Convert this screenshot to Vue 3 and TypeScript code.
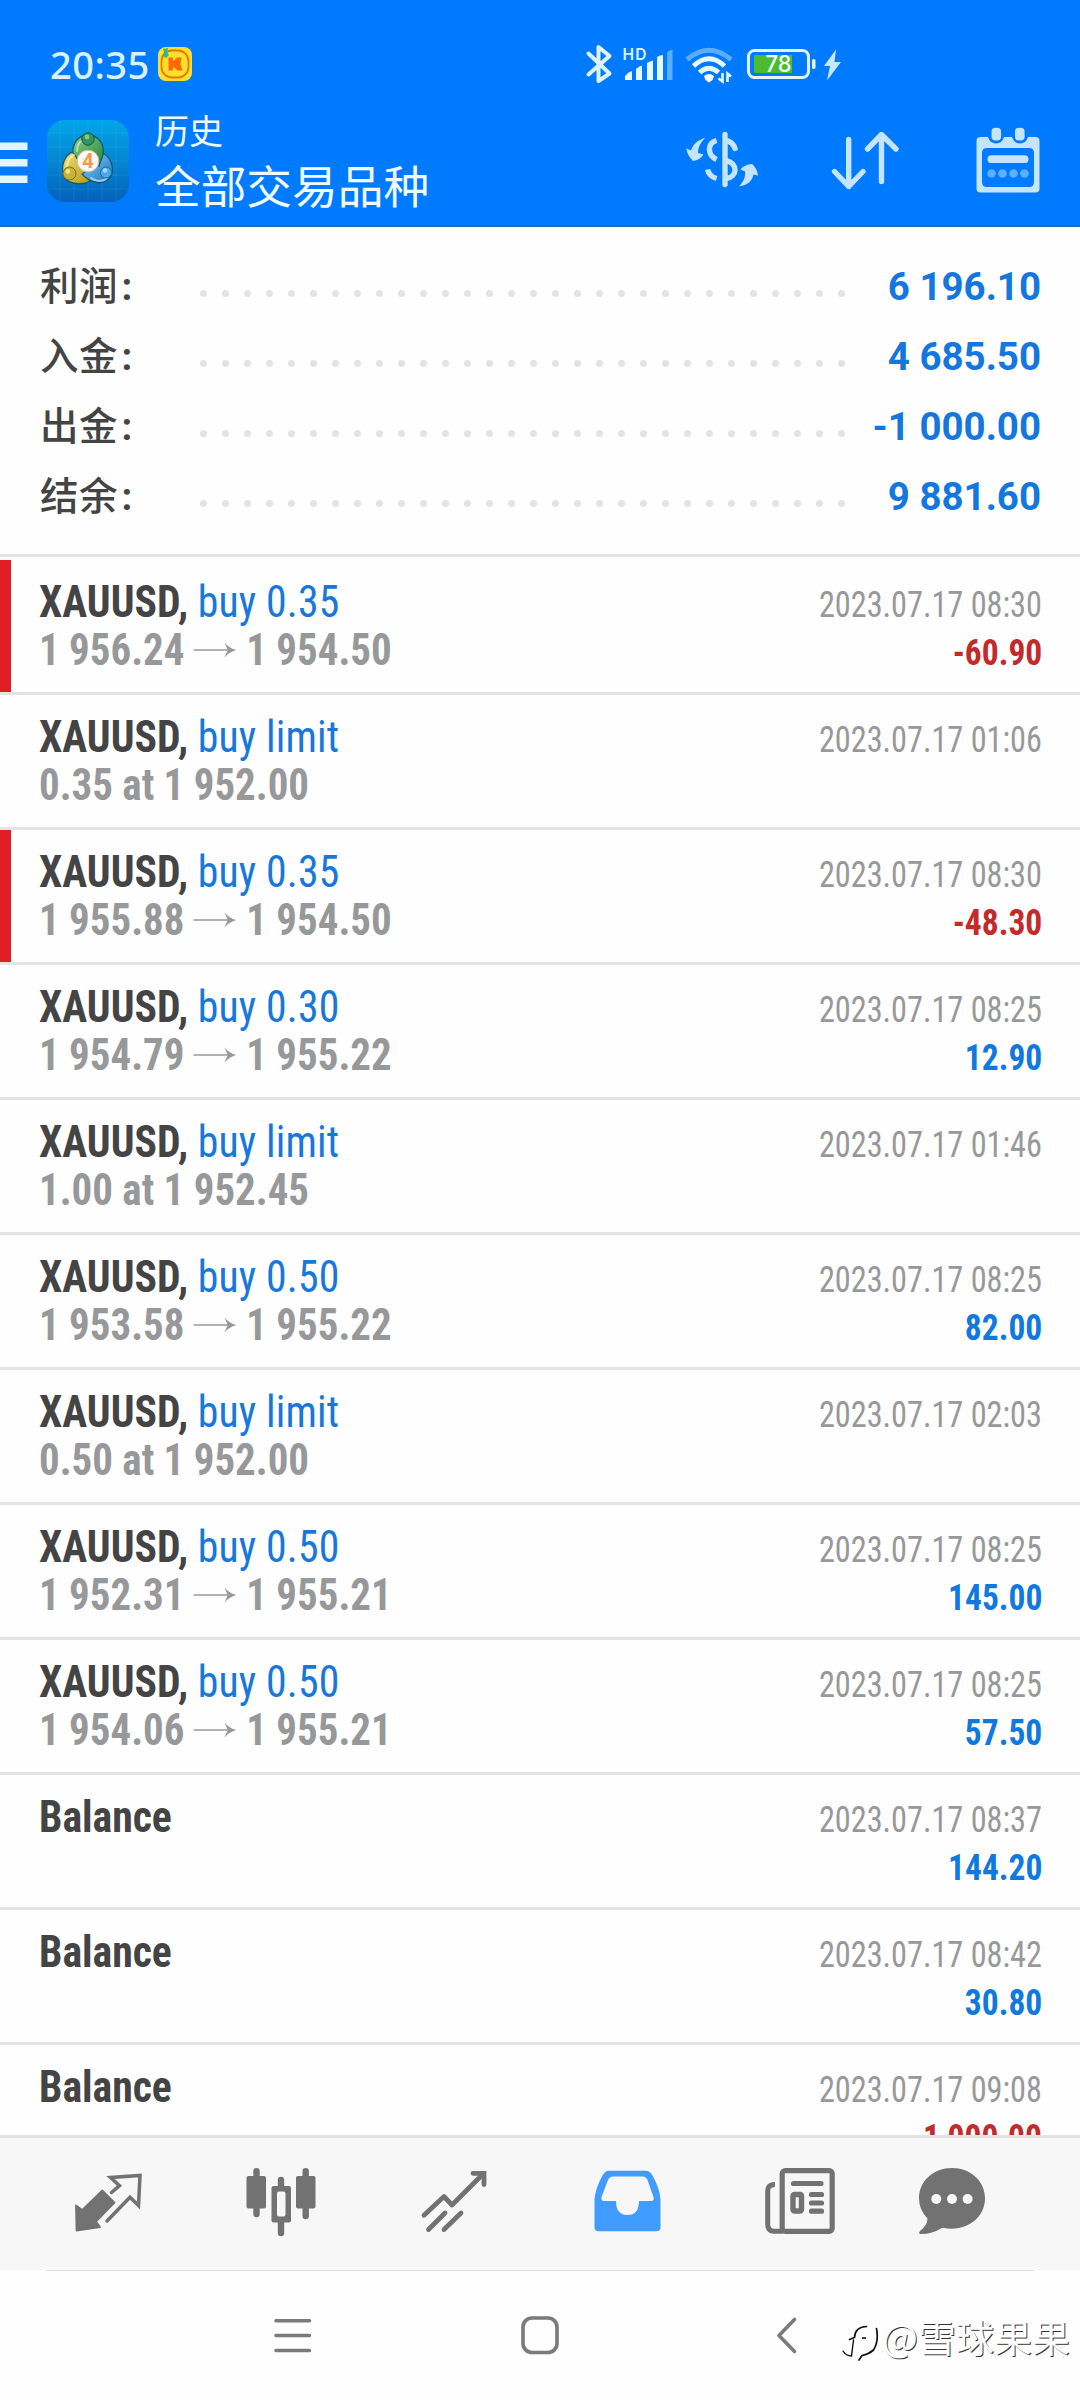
<script setup lang="ts">
interface Total {
  label: string
  value: string
}

interface Deal {
  symbol: string
  action?: string
  from?: string
  to?: string
  note?: string
  time: string
  profit?: string
  marked?: boolean
}

const totals: Total[] = [
  { label: '利润', value: '6 196.10' },
  { label: '入金', value: '4 685.50' },
  { label: '出金', value: '-1 000.00' },
  { label: '结余', value: '9 881.60' },
]

const deals: Deal[] = [
  { symbol: 'XAUUSD,', action: 'buy 0.35', from: '1 956.24', to: '1 954.50', time: '2023.07.17 08:30', profit: '-60.90', marked: true },
  { symbol: 'XAUUSD,', action: 'buy limit', note: '0.35 at 1 952.00', time: '2023.07.17 01:06' },
  { symbol: 'XAUUSD,', action: 'buy 0.35', from: '1 955.88', to: '1 954.50', time: '2023.07.17 08:30', profit: '-48.30', marked: true },
  { symbol: 'XAUUSD,', action: 'buy 0.30', from: '1 954.79', to: '1 955.22', time: '2023.07.17 08:25', profit: '12.90' },
  { symbol: 'XAUUSD,', action: 'buy limit', note: '1.00 at 1 952.45', time: '2023.07.17 01:46' },
  { symbol: 'XAUUSD,', action: 'buy 0.50', from: '1 953.58', to: '1 955.22', time: '2023.07.17 08:25', profit: '82.00' },
  { symbol: 'XAUUSD,', action: 'buy limit', note: '0.50 at 1 952.00', time: '2023.07.17 02:03' },
  { symbol: 'XAUUSD,', action: 'buy 0.50', from: '1 952.31', to: '1 955.21', time: '2023.07.17 08:25', profit: '145.00' },
  { symbol: 'XAUUSD,', action: 'buy 0.50', from: '1 954.06', to: '1 955.21', time: '2023.07.17 08:25', profit: '57.50' },
  { symbol: 'Balance', time: '2023.07.17 08:37', profit: '144.20' },
  { symbol: 'Balance', time: '2023.07.17 08:42', profit: '30.80' },
  { symbol: 'Balance', time: '2023.07.17 09:08', profit: '-1 000.00' },
]

const dots = Array.from({ length: 30 }, (_, i) => i)
</script>

<template>
  <div class="screen">
    <header class="header">
      <div class="status">
        <span class="clock">20:35</span>
        <svg class="k-app" width="34" height="34" viewBox="0 0 34 34">
          <rect width="34" height="34" rx="8" fill="#ffdf2e" />
          <rect x="3.5" y="3.5" width="27" height="27" rx="10.500" fill="none" stroke="#e07a00" stroke-width="1.800" />
          <path d="M5 2l5-1-1 4 2 3-3 3-3-2 1-4z" fill="#26b99a" />
          <path d="M10.500 10.500h4.500v4l4-4h4.500l-1 6.500 2 6.500h-5l-4.500-4v4h-4.500z" fill="#ff6a00" />
        </svg>
        <svg class="indicators" width="264" height="44" viewBox="582 42 264 44">
          <path d="M588.500 53.500L609.500 73.500 598.500 81V47L609.500 56 588.500 74.500" fill="none" stroke="#dff3ff" stroke-width="4" stroke-linejoin="round" stroke-linecap="round" />
          <text x="622.500" y="59.500" font-size="15.500" font-weight="600" textLength="24" fill="#dff3ff">HD</text>
          <g fill="#e8f8ff">
            <path d="M625 80v-4q3-4 7-5v9z" />
            <path d="M636 80V69q3-3 6-3.500V80z" />
            <path d="M647 80V63q3-2 6-2.500V80z" />
            <path d="M657 80V57q3-2 6-2V80z" />
          </g>
          <path d="M667 80V52q3-2 5.500-2.500V80z" fill="#5aadff" />
          <g fill="none" stroke="#e8f8ff" stroke-width="5">
            <path d="M687 59.500Q709 41 731 59.500" stroke="#5aadff" />
            <path d="M693.500 66Q709 51.500 724.500 66" />
            <path d="M699.500 72.500Q709 64 718.500 72.500" />
          </g>
          <path d="M704 76q5-4 10 0l-1.500 4-3.500 2.500-3.500-2.500z" fill="#fff" />
          <path d="M722.500 73v8.500l-4-3M727.500 82v-8.500l3.500 3" fill="none" stroke="#e8f8ff" stroke-width="2.600" />
          <rect x="748.500" y="50.500" width="60" height="27" rx="6" fill="none" stroke="#e2f5ff" stroke-width="3" />
          <rect x="754" y="55" width="38" height="18" fill="#4cbc2e" />
          <text x="765.500" y="72.300" font-size="22.500" font-weight="500" textLength="26" lengthAdjust="spacingAndGlyphs" fill="#f4ffff">78</text>
          <rect x="812" y="59" width="3.500" height="10" rx="1.500" fill="#e2f5ff" />
          <path d="M836 49.500L824 66h6l-3 14.500L841 62h-6.500z" fill="#c9e6ff" />
        </svg>
      </div>

      <div class="appbar">
        <svg class="drawer" width="28" height="44" viewBox="0 140 28 44">
          <path d="M0 146.200H27.500M0 162.700H27.500M0 179.200H27.500" stroke="#e4f4ff" stroke-width="7.500" />
        </svg>
        <svg class="logo" width="84" height="84" viewBox="0 0 84 84">
          <defs>
            <linearGradient id="lgBg" x1="0" y1="0" x2="0" y2="1">
              <stop offset="0" stop-color="#02a6e8" />
              <stop offset="0.550" stop-color="#0582cf" />
              <stop offset="1" stop-color="#0360ba" />
            </linearGradient>
            <linearGradient id="lgGreen" x1="0" y1="0" x2="1" y2="1">
              <stop offset="0" stop-color="#8ed08a" />
              <stop offset="1" stop-color="#1f8437" />
            </linearGradient>
            <linearGradient id="lgGold" x1="0" y1="0" x2="1" y2="1">
              <stop offset="0" stop-color="#f0e47a" />
              <stop offset="1" stop-color="#b59a16" />
            </linearGradient>
            <linearGradient id="lgBlue" x1="0" y1="0" x2="1" y2="1">
              <stop offset="0" stop-color="#8cd4f6" />
              <stop offset="1" stop-color="#1673c0" />
            </linearGradient>
          </defs>
          <rect x="1" y="1" width="82" height="82" rx="18" fill="url(#lgBg)" />
          <path d="M14 2V82M28 2V82M42 2V82M56 2V82M70 2V82M2 14H82M2 28H82M2 42H82M2 56H82M2 70H82" stroke="#5cc6f5" stroke-opacity="0.160" stroke-width="1" />
          <g stroke="#0c4c60" stroke-opacity="0.800" stroke-width="1.300">
            <path d="M17 56C15 42 21 33 31 32L44 62C36 67 20 65 17 56z" fill="url(#lgGold)" />
            <path d="M54 33C64 36 69 48 65 57C60 66 46 66 36 55L46 48z" fill="url(#lgBlue)" />
            <path d="M27 34C26 24 33 16 42 16C52 16 59 25 57 36L53 47L42 34L33 42z" fill="url(#lgGreen)" />
          </g>
          <g fill="none" stroke-width="2" stroke-linecap="round" stroke-opacity="0.700">
            <path d="M31 32C31 26 34 22 38 21" stroke="#d2f0c6" />
            <path d="M21 48C21 42 24 38 28 36" stroke="#fbf6b8" />
            <path d="M45 59C50 63 57 63 61 59" stroke="#bfe8fb" />
          </g>
          <circle cx="42" cy="20" r="6.200" fill="#35955a" stroke="#11563a" />
          <circle cx="23.500" cy="54.500" r="6.500" fill="#cdb132" stroke="#7d7420" />
          <circle cx="60" cy="53.500" r="5.500" fill="#4aaae2" stroke="#1b6aa8" />
          <circle cx="41" cy="18" r="2.400" fill="#83c790" />
          <circle cx="22" cy="52.500" r="2.400" fill="#efe48a" />
          <circle cx="59" cy="51.500" r="2.200" fill="#a5dcf8" />
          <circle cx="42" cy="42" r="10.800" fill="#fbf8f4" stroke="#c9bca6" />
          <text x="42" y="49.300" font-size="20" font-weight="700" text-anchor="middle" fill="#f09a4a">4</text>
        </svg>
        <div class="titles">
          <div class="title-small">历史</div>
          <div class="title-main">全部交易品种</div>
        </div>
        <svg class="tool-currency" width="76" height="64" viewBox="684 128 76 64">
          <g fill="none" stroke="#c5e4ff" stroke-width="5.400">
            <path d="M725 134.500V184.500" stroke-linecap="round" />
            <path d="M716.600 140.500C707 143 707 155 716.600 159.500" />
            <path d="M707.500 169.500C708.500 174 711.500 177 716.600 178.500" stroke-linecap="butt" />
            <path d="M726 140.500Q733 142 735 148.500" stroke-linecap="round" />
            <path d="M726 160.500C738 163 738 177 726 178.500" />
          </g>
          <g fill="#c5e4ff">
            <path d="M705 138C700 143 698 148 698 153L703.500 154.500Q700 160 693 161Q687.500 156 686.300 148.500L691 150.500C693 144 698 140 705 138z" />
            <path d="M739 186.500C744 181 745.500 177 745 171.500L740.500 169.500Q744 164.500 752 164Q757 168 758 175.500L753.500 174.500C752 181 748 185 739 186.500z" />
          </g>
        </svg>
        <svg class="tool-sort" width="72" height="64" viewBox="829 128 72 64">
          <g fill="none" stroke="#c5e4ff" stroke-width="5.400" stroke-linecap="round" stroke-linejoin="round">
            <path d="M848.700 139.500V186.500M834.500 171.500L848.700 186.500 863 171.500" />
            <path d="M881.500 181.500V135M867.500 149L881.500 134.500 896 149" />
          </g>
        </svg>
        <svg class="tool-calendar" width="66" height="68" viewBox="975 126 66 68">
          <path fill-rule="evenodd" fill="#c5e4ff" d="M980.500 137H988Q990 143.500 996 143.500T1004 137H1012Q1014 143.500 1020 143.500T1028 137H1035.500Q1039.500 137 1039.500 141V188.500Q1039.500 192.500 1035.500 192.500H980.500Q976.500 192.500 976.500 188.500V141Q976.500 137 980.500 137zM987 148Q982 148 982 153V182Q982 187 987 187H1029Q1034 187 1034 182V153Q1034 148 1029 148z" />
          <rect x="991.500" y="127.800" width="9.600" height="12.600" rx="4" fill="#c5e4ff" />
          <rect x="1015" y="127.800" width="9.600" height="12.600" rx="4" fill="#c5e4ff" />
          <rect x="987.500" y="155.300" width="41" height="7.800" rx="3.900" fill="#c5e4ff" />
          <g fill="#5fafff">
            <circle cx="991.500" cy="173.500" r="4.300" />
            <circle cx="1002.500" cy="173.500" r="4.300" />
            <circle cx="1013.500" cy="173.500" r="4.300" />
            <circle cx="1024.500" cy="173.500" r="4.300" />
          </g>
        </svg>
      </div>
    </header>

    <section class="totals">
      <div v-for="t in totals" :key="t.label" class="total">
        <span class="total-label">{{ t.label }}<i class="colon">:</i></span>
        <span class="leader"><i v-for="d in dots" :key="d" class="dot"></i></span>
        <b class="total-value">{{ t.value }}</b>
      </div>
    </section>

    <main class="deals">
      <article v-for="(d, i) in deals" :key="i" class="deal" :class="{ marked: d.marked }">
        <div class="line">
          <span class="name"><b class="symbol">{{ d.symbol }}</b><span v-if="d.action" class="action">{{ d.action }}</span></span>
          <span class="time">{{ d.time }}</span>
        </div>
        <div class="line">
          <span v-if="d.from" class="prices">
            <span class="price">{{ d.from }}</span>
            <svg class="arrow" width="46.500" height="18" viewBox="0 0 44 18" preserveAspectRatio="none">
              <path d="M0 9H40" stroke="#97989a" stroke-width="1.600" />
              <path d="M31.500 1.200Q35.500 6.500 43.500 9Q35.500 11.500 31.500 16.800L35 9z" fill="#97989a" />
            </svg>
            <span class="price">{{ d.to }}</span>
          </span>
          <span v-else class="prices">{{ d.note }}</span>
          <b v-if="d.profit" class="profit" :class="{ loss: d.profit.startsWith('-') }">{{ d.profit }}</b>
        </div>
      </article>
    </main>

    <nav class="tabs">
      <svg width="80" height="80" viewBox="68 104 80 80">
        <path d="M111.500 132.500L119.500 125.700 110.500 117.500 140 115.500 138.500 145.500 130 137.200 107 161" fill="none" stroke="#727272" stroke-width="3.500" stroke-linecap="round" />
        <path d="M76 145.500L82.300 150 102.300 130.500 114.500 142.700 96 161.500 100 167 76.500 170.500z" fill="#727272" stroke="#727272" stroke-width="1.800" stroke-linejoin="round" />
      </svg>
      <svg width="80" height="80" viewBox="241 104 80 80">
        <g stroke="#727272" stroke-width="6.400" stroke-linecap="round">
          <path d="M256.500 111.200V154M281 120V173M305.700 111.200V156" />
        </g>
        <rect x="246.500" y="116" width="19.500" height="32.500" rx="2" fill="#727272" />
        <rect x="296" y="116" width="19.500" height="32.500" rx="2" fill="#727272" />
        <rect x="271.500" y="126" width="19.500" height="36.500" rx="2" fill="#727272" />
        <rect x="277" y="131.500" width="8.500" height="25" rx="2" fill="#f7f7f7" />
      </svg>
      <svg width="80" height="80" viewBox="414 104 80 80">
        <g fill="none" stroke="#727272" stroke-width="4.800" stroke-linecap="round">
          <path d="M424 155.300L444 136.500 452 145 483 114" stroke-linejoin="round" />
          <path d="M473 113.300H484V124.500M428.500 169.500L445 153M444 169.500L461 153" />
        </g>
      </svg>
      <svg width="80" height="80" viewBox="587 104 80 80">
        <path fill="#419cff" d="M609 110.700H646Q650 110.700 652.500 115.500Q659.500 128 660.500 139V167.500Q660.500 171.300 656.500 171.300H598.500Q594.500 171.300 594.500 167.500V139Q595.500 128 602.500 115.500Q605 110.700 609 110.700z" />
        <path d="M613 116.500Q609.500 116.500 608 120L601.500 137Q600.800 141 604 141H616Q616 155 627.500 155T639 141H651Q654.500 141 653.500 137L647.500 120Q646 116.500 642.500 116.500z" fill="#f7f7f7" />
      </svg>
      <svg width="80" height="80" viewBox="761 104 80 80">
        <rect x="783.200" y="110.600" width="50" height="60.700" rx="3" fill="#f7f7f7" stroke="#727272" stroke-width="5.200" />
        <path d="M776 124.500Q768.700 124.500 768.700 131V164Q768.700 171.300 775 171.300H784" fill="none" stroke="#727272" stroke-width="5" />
        <path d="M794.500 123.500H822M812.500 134.500H822.500M812.500 143H822.500M812.500 151.200H822.500" stroke="#727272" stroke-width="5.200" stroke-linecap="round" />
        <rect x="794" y="134.500" width="8.500" height="16.500" rx="1.500" fill="#f7f7f7" stroke="#727272" stroke-width="5.400" />
      </svg>
      <svg width="80" height="80" viewBox="913 104 80 80">
        <path d="M953 108C971.500 108 986 121 986 138.300S971.500 168.700 953 168.700Q948 168.700 943.500 167.700Q932 174.500 921 174Q919 173 921.500 170.500Q928.500 165 928.500 158.500Q920 150 920 138.300C920 121 934.500 108 953 108z" fill="#727272" />
        <g fill="#f7f7f7">
          <circle cx="937.300" cy="139" r="5" />
          <circle cx="953" cy="139" r="5" />
          <circle cx="968.600" cy="139" r="5" />
        </g>
      </svg>
    </nav>

    <footer class="sysnav">
      <svg width="40" height="40" viewBox="272 315 40 40">
        <path d="M276 320.700H309.500M276 335.500H309.500M276 350.500H309.500" stroke="#7b7b7b" stroke-width="3.600" stroke-linecap="round" />
      </svg>
      <svg width="40" height="40" viewBox="520 315 40 40">
        <rect x="523" y="318" width="34" height="34.500" rx="9" fill="none" stroke="#7b7b7b" stroke-width="3.600" />
      </svg>
      <svg width="40" height="40" viewBox="768 315 40 40">
        <path d="M794.500 319.500L779 335.500 794.500 351.500" fill="none" stroke="#7b7b7b" stroke-width="3.600" stroke-linecap="round" stroke-linejoin="round" />
      </svg>
      <div class="credit">
        <svg width="40" height="42" viewBox="0 0 40 42">
          <g fill="none" stroke="#111" stroke-linecap="round">
            <path d="M1 32Q4 37 9.500 37L11.500 21" stroke-width="1.400" />
            <path d="M7.500 20.500L12.500 18.500Q13 8 24.500 7.500" stroke-width="1.700" />
            <path d="M20 19H24" stroke-width="1.600" stroke-linecap="butt" />
            <path d="M34.500 9.500Q37 22 31.500 31Q27 35 20 36.500L17 41" stroke-width="1.700" />
          </g>
        </svg>
        <span>@雪球果果</span>
      </div>
    </footer>
  </div>
</template>

<style>
html,
body {
  margin: 0;
  background: #fff;
}
</style>

<style scoped>
.screen {
  width: 1080px;
  height: 2400px;
  display: flex;
  flex-direction: column;
  overflow: hidden;
  background: #fefefe;
  color: #444;
  font-family: Roboto, "Noto Sans CJK SC", sans-serif;
}

svg {
  display: block;
  flex: none;
}

.header {
  height: 225px;
  flex: none;
  background: #007aff;
  border-bottom: 2px solid #1b6db5;
}

.status {
  height: 98px;
  display: flex;
  box-sizing: border-box;
  padding-top: 42px;
}

.clock {
  width: 108px;
  margin-top: -1px;
  padding-left: 50px;
  font: 500 38px/46px "Noto Sans", sans-serif;
  letter-spacing: 0.5px;
  color: #d9f1ff;
}

.k-app {
  margin-top: 5px;
}

.indicators {
  margin-left: 390px;
  font-family: Inter, sans-serif;
}

.appbar {
  display: flex;
}

.drawer {
  margin-top: 42px;
}

.logo {
  margin: 21px 0 0 18px;
}

.titles {
  width: 529px;
  padding-left: 25px;
  color: #f0faff;
  white-space: nowrap;
}

.title-small {
  font-size: 34px;
  line-height: 40px;
  padding-top: 14px;
}

.title-main {
  font-size: 45.700px;
  line-height: 56px;
  padding-top: 9px;
}

.tool-currency {
  margin-top: 30px;
}

.tool-sort {
  margin: 30px 0 0 69px;
}

.tool-calendar {
  margin: 28px 0 0 74px;
}

.totals {
  height: 330px;
  flex: none;
  box-sizing: border-box;
  padding: 25px 39px 0 40px;
  border-bottom: 3px solid #e4e4e4;
}

.total {
  height: 70px;
  display: flex;
  line-height: 70px;
}

.total-label {
  width: 160px;
  font-size: 38.500px;
  font-weight: 500;
  letter-spacing: 0.5px;
}

.colon {
  margin-left: 3.500px;
  font-style: normal;
  font-weight: 700;
}

.leader {
  width: 645px;
  height: 7px;
  padding-top: 38px;
  display: flex;
  justify-content: space-between;
}

.dot {
  width: 7px;
  height: 7px;
  border-radius: 50%;
  background: #e3e3e3;
}

.total-value {
  flex: 1;
  text-align: right;
  font-size: 38.500px;
  font-weight: 700;
  color: #1477e0;
}

.deals {
  flex: none;
  height: 1575px;
  padding-top: 3px;
  overflow: hidden;
  font-family: "Roboto Condensed", Roboto, sans-serif;
  font-stretch: 75%;
}

.deal {
  height: 132px;
  box-sizing: border-box;
  margin-bottom: 3px;
  padding: 18px 38px 0 39px;
  box-shadow: 0 3px 0 #e4e4e4;
}

.marked {
  padding-left: 28px;
  border-left: 11px solid #df1f22;
}

.line {
  height: 48px;
  display: flex;
  justify-content: space-between;
  align-items: baseline;
  line-height: 48px;
  white-space: nowrap;
}

.name {
  font-size: 44px;
  transform: scaleX(0.947);
  transform-origin: left;
}

.symbol {
  font-weight: 700;
}

.action {
  margin-left: 10px;
  letter-spacing: 0.2px;
  color: #1877db;
}

.time {
  font-size: 36px;
  color: #97989a;
  transform: scaleX(0.896);
  transform-origin: right;
}

.prices {
  display: flex;
  font-size: 44px;
  font-weight: 700;
  color: #97989a;
  transform: scaleX(0.93);
  transform-origin: left;
}

/* keeps the row's baseline when there is no price text */
.prices::before {
  content: "\200b";
}

.arrow {
  margin: 15px 10px 0;
}

.profit {
  font-size: 36px;
  font-weight: 700;
  color: #0f79df;
  transform: scaleX(0.93);
  transform-origin: right;
}

.loss {
  color: #c22a2b;
}

.tabs {
  position: relative;
  height: 135px;
  flex: none;
  box-sizing: border-box;
  display: flex;
  align-items: center;
  padding-left: 68px;
  gap: 93px;
  border-top: 3px solid #e4e4e4;
  background: #f7f7f7;
}

.tabs svg:last-child {
  margin-left: -21px;
}

.tabs::after {
  content: "";
  position: absolute;
  left: 46px;
  right: 46px;
  bottom: -1px;
  height: 1px;
  background: #dedede;
}

.sysnav {
  flex: 1;
  display: flex;
  padding: 45px 0 0 272px;
  gap: 208px;
}

.credit {
  display: flex;
  margin: -1px 0 0 -174px;
  color: #fff;
  font: 400 38px/44px "Noto Sans CJK SC", sans-serif;
  text-shadow: 1px 1px 0 #333;
  white-space: nowrap;
}

.credit svg {
  margin-top: 5px;
}
</style>
